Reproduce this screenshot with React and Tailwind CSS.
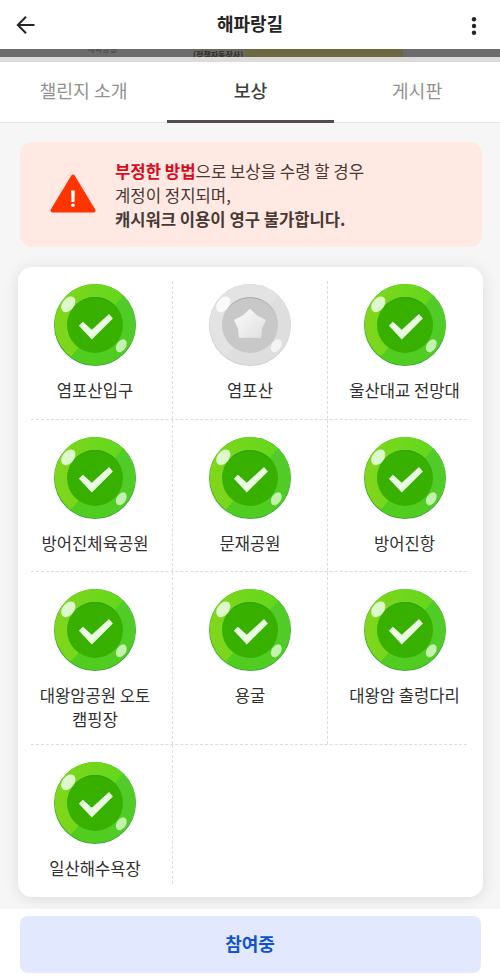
const REWARD_ROWS = [
  {
    height: 'h-[138px]',
    offset: 'pt-[3px]',
    items: [
      { name: '염포산입구', done: true },
      { name: '염포산', done: false },
      { name: '울산대교 전망대', done: true },
    ],
  },
  {
    height: 'h-[151px]',
    offset: 'pt-[17px]',
    items: [
      { name: '방어진체육공원', done: true },
      { name: '문재공원', done: true },
      { name: '방어진항', done: true },
    ],
  },
  {
    height: 'h-[172px]',
    offset: 'pt-[17px]',
    items: [
      { name: '대왕암공원 오토캠핑장', lines: ['대왕암공원 오토', '캠핑장'], done: true },
      { name: '용굴', done: true },
      { name: '대왕암 출렁다리', done: true },
    ],
  },
  {
    height: 'h-[139px]',
    offset: 'pt-[17px]',
    items: [{ name: '일산해수욕장', done: true }],
  },
];

function BackIcon() {
  return (
    <svg width="20" height="20" viewBox="0 0 20 20" fill="none" stroke="#252525" strokeWidth="2">
      <path d="M18.5 10H2.2M10 1.8L1.8 10l8.2 8.2" />
    </svg>
  );
}

function MoreIcon() {
  return (
    <svg width="6" height="20" viewBox="0 0 6 20" fill="#252525">
      <circle cx="3" cy="3.2" r="2.2" />
      <circle cx="3" cy="10" r="2.2" />
      <circle cx="3" cy="16.8" r="2.2" />
    </svg>
  );
}

function WarningIcon() {
  return (
    <svg width="46" height="39" viewBox="0 0 46 39" className="mb-[3px]">
      <path d="M23 2.5L43.5 36.5H2.5Z" fill="#ff3500" stroke="#ff3500" strokeWidth="4" strokeLinejoin="round" />
      <path d="M21.2 16.5h3.6l-.3 11.5h-3z" fill="#fff" />
      <circle cx="23" cy="31.3" r="1.8" fill="#fff" />
    </svg>
  );
}

function DoneBadge() {
  return (
    <svg width="82" height="82" viewBox="0 0 82 82" className="shrink-0">
      <defs>
        <clipPath id="doneClip">
          <circle cx="41" cy="40.4" r="40.4" />
        </clipPath>
        <linearGradient id="doneLight" x1="0" y1="0" x2="1" y2="0">
          <stop offset="0" stopColor="#82d61b" />
          <stop offset="1" stopColor="#5cd81c" />
        </linearGradient>
        <linearGradient id="doneDark" x1="1" y1="0" x2="0" y2="1">
          <stop offset="0" stopColor="#51cb2b" />
          <stop offset="1" stopColor="#51cd1c" />
        </linearGradient>
      </defs>
      <circle cx="41" cy="41" r="41" fill="#35ab36" />
      <g clipPath="url(#doneClip)">
        <rect width="82" height="82" fill="url(#doneLight)" />
        <path d="M72 8L82 16V82H8L20 69Z" fill="url(#doneDark)" />
      </g>
      <circle cx="41" cy="41" r="28" fill="#37b000" />
      <path d="M14.5 32A28 28 0 0 1 67.5 32A28.6 28.6 0 0 0 14.5 32Z" fill="#31a508" />
      <path d="M24.9 41.8L28.9 37.8L37.8 45.8L55 30L58.9 34.5L37.8 55.4Z" fill="#e9fbe0" />
      <ellipse cx="14.3" cy="20.3" rx="5.9" ry="8.8" transform="rotate(38 14.3 20.3)" fill="#ddf8cb" />
      <ellipse cx="67.3" cy="61.8" rx="4.6" ry="7.1" transform="rotate(32 67.3 61.8)" fill="#c2f2ad" />
    </svg>
  );
}

function EmptyBadge() {
  return (
    <svg width="82" height="82" viewBox="0 0 82 82" className="shrink-0">
      <defs>
        <clipPath id="emptyClip">
          <circle cx="41" cy="40.4" r="40.4" />
        </clipPath>
        <linearGradient id="emptyStar" x1="0" y1="0" x2="1" y2="1">
          <stop offset="0.2" stopColor="#f5f5f5" />
          <stop offset="1" stopColor="#e0e0e0" />
        </linearGradient>
      </defs>
      <circle cx="41" cy="41" r="41" fill="#d0d0d0" />
      <g clipPath="url(#emptyClip)">
        <rect width="82" height="82" fill="#e3e3e3" />
        <path d="M72 8L82 16V82H8L20 69Z" fill="#dedede" />
      </g>
      <circle cx="41" cy="41" r="28" fill="#c8c8c8" />
      <path d="M13.6 35.5A28 28 0 0 1 68.4 35.5A28.1 27.5 0 0 0 13.6 35.5Z" fill="#a0a0a0" />
      <path
        d="M41 26L47.4 32.2L55.8 36.4L52 44.2L51.2 53L41 52.6L30.8 53L30 44.2L26.2 36.4L34.6 32.2Z"
        fill="url(#emptyStar)"
        stroke="url(#emptyStar)"
        strokeWidth="2"
        strokeLinejoin="round"
      />
      <ellipse cx="14.3" cy="20.3" rx="5.9" ry="8.8" transform="rotate(38 14.3 20.3)" fill="#fafafa" />
      <ellipse cx="67.3" cy="61.8" rx="4.6" ry="7.1" transform="rotate(32 67.3 61.8)" fill="#f4f4f4" />
    </svg>
  );
}

function RewardCell({ item, offset, divider }) {
  const lines = item.lines || [item.name];
  return (
    <div className={`flex flex-col items-center ${offset} ${divider ? 'border-r border-dashed border-[#dcdcdc]' : 'pr-0.5'}`}>
      {item.done ? <DoneBadge /> : <EmptyBadge />}
      <div className="mt-[13px] text-center text-[16.6px] leading-[23.5px] whitespace-nowrap text-[#303030]">
        {lines.map((line) => (
          <div key={line}>{line}</div>
        ))}
      </div>
    </div>
  );
}

export default function App() {
  return (
    <div className="flex h-[980px] w-[500px] flex-col overflow-hidden bg-[#f6f6f6] font-['Noto_Sans_CJK_KR',sans-serif]">
      <header className="grid h-[49px] shrink-0 grid-cols-3 items-center bg-white px-4">
        <BackIcon />
        <h1 className="pb-[3px] text-center text-[18px] leading-6 font-bold text-[#252525]">해파랑길</h1>
        <div className="flex justify-end pt-[3px] pr-[7px]">
          <MoreIcon />
        </div>
      </header>

      {/* bottom edge of the scrolled cover image */}
      <div className="flex h-2 shrink-0 overflow-hidden bg-[#6c6c6c]">
        <div className="flex h-2 w-[193px] items-end justify-end overflow-hidden pr-[76px] text-[8px] leading-[9px] text-[#444]">
          <span className="-translate-y-1">해파랑길</span>
        </div>
        <div className="h-2 w-[53px] overflow-hidden bg-[#696960] text-[8px] leading-[11px] font-bold whitespace-nowrap text-[#2c2c25]">
          (정책자동장사)
        </div>
        <div className="h-2 w-[157px] bg-[#6b6843]" />
      </div>
      <div className="h-[5px] shrink-0 bg-[#dcdadb]" />

      <nav className="grid h-[61px] shrink-0 grid-cols-[167px_167px_166px] border-b border-[#e6e6e6] bg-white text-center text-[18.3px] leading-[57px] text-[#929292]">
        <div>챌린지 소개</div>
        <div className="h-[61px] border-b-[3px] border-[#544b4d] font-medium text-[#453e3f]">보상</div>
        <div>게시판</div>
      </nav>

      <main className="flex min-h-0 flex-1 flex-col pt-[19px]">
        <section className="ml-5 flex h-[105px] w-[462px] shrink-0 items-center rounded-[12px] bg-[#ffe9e2] pl-[30px]">
          <WarningIcon />
          <div className="ml-[19px] text-[16.7px] leading-6 whitespace-nowrap text-[#483936]">
            <p>
              <strong className="font-bold text-[#dc0920]">부정한 방법</strong>으로 보상을 수령 할 경우
            </p>
            <p>계정이 정지되며,</p>
            <p className="text-[16.6px] font-bold">캐시워크 이용이 영구 불가합니다.</p>
          </div>
        </section>

        <section className="mt-5 ml-[18px] h-[630px] w-[465px] shrink-0 rounded-[14px] bg-white pt-[14px] shadow-[0_2px_16px_rgba(0,0,0,0.11)]">
          {REWARD_ROWS.map((row, i) => (
            <div key={i}>
              {i > 0 && <div className="mr-4 ml-[13px] border-t border-dashed border-[#dcdcdc]" />}
              <div className={`grid grid-cols-3 ${row.height}`}>
                {row.items.map((item, j) => (
                  <RewardCell
                    key={item.name}
                    item={item}
                    offset={row.offset}
                    divider={j < 2}
                  />
                ))}
              </div>
            </div>
          ))}
        </section>
      </main>

      <footer className="h-[71px] shrink-0 bg-white pt-[7px] pl-5">
        <button className="block h-[57px] w-[461px] rounded-[8px] bg-[#e2e9ff] pr-px pb-[3px] text-[18px] font-bold text-[#1152cf]">
          참여중
        </button>
      </footer>
    </div>
  );
}
